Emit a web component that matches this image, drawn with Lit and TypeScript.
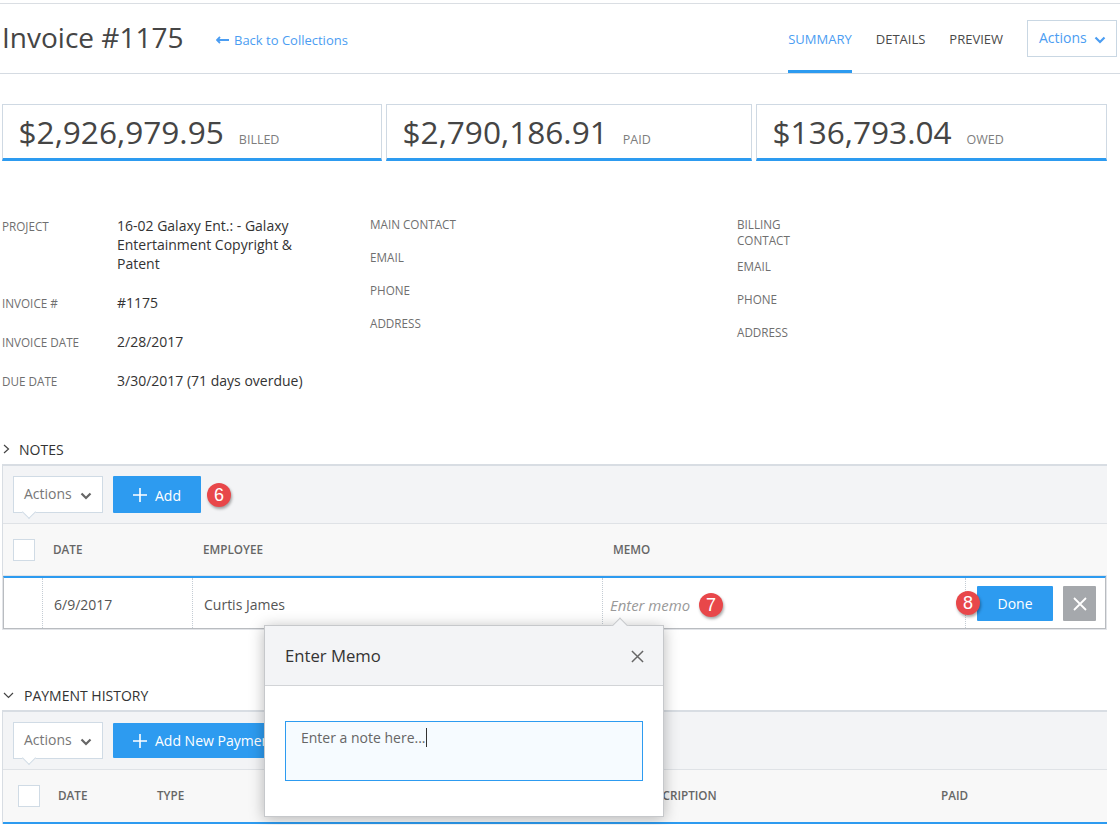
import { LitElement, html, css } from "lit";
import { customElement } from "lit/decorators.js";

const chev = () => html`<svg width="12" height="8" viewBox="0 0 12 8"><path d="M1.5 1.5 6 6l4.5-4.5" fill="none" stroke="currentColor" stroke-width="2.2"/></svg>`;
const plus = html`<svg width="16" height="16" viewBox="0 0 16 16"><path d="M8 1v14M1 8h14" stroke="#fff" stroke-width="1.6" fill="none"/></svg>`;
const x = (s: number, c: string, w: number) => html`<svg width=${s} height=${s} viewBox="0 0 14 14"><path d="M1 1l12 12M13 1 1 13" stroke=${c} stroke-width=${w} fill="none"/></svg>`;

@customElement("app-root")
export class AppRoot extends LitElement {
  static styles = css`
    :host { display: block; position: relative; width: 1120px; height: 825px; overflow: hidden; background: #fff; font-family: "Open Sans", sans-serif; color: #444; font-size: 14px; }
    * { box-sizing: border-box; }
    .top { margin-top: 3px; border-top: 1px solid #dadee3; border-bottom: 1px solid #d5dbe2; height: 71px; display: flex; align-items: stretch; padding-left: 2px; }
    .title { font-size: 28px; line-height: 38px; margin-top: 14px; color: #454545; width: 214px; white-space: nowrap; }
    .back { display: flex; align-items: center; gap: 5px; color: #4b9df2; font-size: 13px; height: 20px; margin-top: 26px; }
    .tabs { margin-left: auto; display: flex; align-items: stretch; padding-right: 3px; }
    .tab { font-size: 13px; text-transform: uppercase; line-height: 16px; padding-top: 27px; margin-right: 24px; color: #4a4a4a; border-bottom: 3px solid transparent; height: 69px; }
    .tab.on { color: #4b9df2; border-bottom-color: #2d9bf0; }
    .act { display: flex; align-items: center; justify-content: space-between; width: 90px; height: 37px; margin-top: 16px; padding: 0 10px 2px 11px; border: 1px solid #c9d7e3; color: #4b9df2; font-size: 14px; }
    .act svg { margin-top: 4px; }
    .stats { display: grid; grid-template-columns: 380px 366px 351px; gap: 4px; margin: 30px 0 0 2px; }
    .stat { height: 57px; border: 1px solid #cfd9e3; border-bottom: 3px solid #2d9bf0; display: flex; align-items: baseline; padding-left: 15.5px; line-height: 54px; }
    .stat b { font-weight: 400; font-size: 31.6px; color: #454545; margin-right: 15px; }
    .stat span { font-size: 12.5px; color: #7d7d7d; }
    .info { display: grid; grid-template-columns: 368px 367px 1fr; margin: 55px 0 0 2px; height: 223px; }
    .l { display: grid; grid-template-columns: 115px 190px; row-gap: 20px; align-content: start; line-height: 19px; font-size: 14px; color: #333; }
    .lab { font-size: 11.7px; color: #6f6f6f; text-transform: uppercase; }
    .l .lab { line-height: 21px; margin-bottom: -2px; }
    .m { display: flex; flex-direction: column; gap: 17px; line-height: 16px; }
    .m .lab.tight { width: 60px; margin-bottom: -7px; }
    .sec { display: flex; align-items: center; height: 20px; color: #333; font-size: 14px; padding-left: 3px; }
    .sec svg { color: #444; }
    .notes-h { gap: 9px; }
    .pay-h { gap: 10px; margin-top: 56px; }
    .panel { margin: 5px 13px 0 2px; border-top: 2px solid #d8dde3; border-left: 1px solid #d8dde3; }
    .bar { height: 58px; background: #f3f4f6; border-bottom: 1px solid #dfe2e6; display: flex; gap: 10px; padding: 10px 0 0 10px; align-items: flex-start; }
    .pill { position: relative; width: 90px; height: 37px; background: #fff; border: 1px solid #d0dbe5; display: flex; align-items: center; justify-content: space-between; padding: 0 10px 2px 10px; color: #777; }
    .pill svg { margin-top: 4px; color: #666; }
    .pill::after { content: ""; position: absolute; left: 10px; bottom: -5px; width: 9px; height: 9px; background: #fff; border-right: 1px solid #d0dbe5; border-bottom: 1px solid #d0dbe5; transform: rotate(45deg); }
    .btn { height: 37px; background: #2d9bf0; border-radius: 1px; color: #fff; display: flex; align-items: center; gap: 7px; padding: 1px 20px 0 19px; white-space: nowrap; font-size: 14px; }
    .btn.short { height: 35px; margin-top: 1px; padding-top: 0; }
    .badge { flex: none; width: 24px; height: 24px; border-radius: 50%; background: #e8474a; color: #fff; font: 18px/24px "Liberation Sans", sans-serif; text-align: center; box-shadow: 1px 2px 3px rgba(0,0,0,.35); }
    .bar .badge { margin: 7px 0 0 -4px; }
    .head { height: 52px; background: #f8f8f8; display: grid; align-items: center; font-size: 11.7px; font-weight: 600; color: #666; }
    .n { grid-template-columns: 39px 150px 410px 1fr; }
    .cb { width: 22px; height: 22px; background: #fff; border: 1px solid #d0dbe5; }
    .head .lbl { padding: 0 0 2px 11px; }
    .n .cb { margin-left: 10px; }
    .row { height: 53px; margin-right: 1px; border-top: 2px solid #2d9bf0; border-left: 1px solid #b9bcc0; border-right: 1px solid #b9bcc0; border-bottom: 1px solid #b9bcc0; box-shadow: 0 0 0 1px #e2e4e8; display: grid; grid-template-columns: 38px 150px 410px 363px 1fr; background: #fff; }
    .c { border-left: 1px dotted #c4ccd4; display: flex; align-items: center; padding: 3px 0 0 11px; color: #555; position: relative; }
    .c:first-child { border-left: 0; }
    .memo { font-style: italic; font-size: 14.9px; color: #999; padding-left: 7px; gap: 9px; }
    .memo .badge { font-style: normal; }
    .acts { gap: 10px; padding: 1px 0 0 11px; }
    .done { width: 76px; height: 35px; background: #2d9bf0; color: #fff; display: flex; align-items: center; justify-content: center; border-radius: 1px; }
    .cancel { width: 33px; height: 35px; background: #a5a8ac; display: flex; align-items: center; justify-content: center; border-radius: 1px; }
    .over { position: absolute; left: -10px; top: 13px; }
    .p { grid-template-columns: 55px 99px 484px 300px 1fr; }
    .p .cb { margin-left: 15px; }
    .head.p .lbl { padding-left: 0; }
    .p-line { height: 2px; background: #2d9bf0; }
    .pop { position: absolute; left: 264px; top: 625px; width: 400px; height: 192px; background: #fff; border: 1px solid #c6c8cb; box-shadow: 0 2px 14px rgba(0,0,0,.28); }
    .pop::before { content: ""; position: absolute; left: 349px; top: -6px; width: 11px; height: 11px; background: #f3f4f6; border-left: 1px solid #c6c8cb; border-top: 1px solid #c6c8cb; transform: rotate(45deg); }
    .ph { position: relative; height: 60px; background: #f3f4f6; border-bottom: 1px solid #d2d4d7; display: flex; align-items: center; justify-content: space-between; padding: 0 19px 0 20px; font-size: 16.7px; color: #333; }
    .ph svg { margin-top: 2px; }
    .ta { margin: 35px 20px 0; height: 60px; background: #f6fbff; border: 1px solid #2d9bf0; padding: 6px 0 0 15px; color: #666; font-size: 14px; line-height: 19px; }
    .caret { display: inline-block; width: 1px; height: 19px; background: #333; vertical-align: top; }
  `;

  render() {
    return html`
      <div class="top">
        <div class="title">Invoice #1175</div>
        <div class="back">
          <svg width="13" height="8" viewBox="0 0 13 8"><path d="M13 4H2M4 1 1 4l3 3" stroke="#4b9df2" stroke-width="1.8" fill="none"/></svg>
          Back to Collections
        </div>
        <div class="tabs">
          <div class="tab on">Summary</div>
          <div class="tab">Details</div>
          <div class="tab">Preview</div>
          <div class="act">Actions ${chev()}</div>
        </div>
      </div>

      <div class="stats">
        <div class="stat"><b>$2,926,979.95</b><span>BILLED</span></div>
        <div class="stat"><b>$2,790,186.91</b><span>PAID</span></div>
        <div class="stat"><b>$136,793.04</b><span>OWED</span></div>
      </div>

      <div class="info">
        <div class="l">
          <div class="lab">Project</div><div>16-02 Galaxy Ent.: - Galaxy Entertainment Copyright &amp; Patent</div>
          <div class="lab">Invoice #</div><div>#1175</div>
          <div class="lab">Invoice Date</div><div>2/28/2017</div>
          <div class="lab">Due Date</div><div>3/30/2017 (71 days overdue)</div>
        </div>
        <div class="m">
          <div class="lab">Main Contact</div>
          <div class="lab">Email</div>
          <div class="lab">Phone</div>
          <div class="lab">Address</div>
        </div>
        <div class="m">
          <div class="lab tight">Billing Contact</div>
          <div class="lab">Email</div>
          <div class="lab">Phone</div>
          <div class="lab">Address</div>
        </div>
      </div>

      <div class="sec notes-h">
        <svg width="7" height="10" viewBox="0 0 7 10"><path d="M1 1l4.5 4L1 9" fill="none" stroke="currentColor" stroke-width="1.2"/></svg>
        NOTES
      </div>
      <div class="panel">
        <div class="bar">
          <div class="pill">Actions ${chev()}</div>
          <div class="btn">${plus} Add</div>
          <div class="badge">6</div>
        </div>
        <div class="head n">
          <div class="cb"></div>
          <div class="lbl">DATE</div>
          <div class="lbl">EMPLOYEE</div>
          <div class="lbl">MEMO</div>
        </div>
        <div class="row">
          <div class="c"></div>
          <div class="c">6/9/2017</div>
          <div class="c">Curtis James</div>
          <div class="c memo">Enter memo <div class="badge">7</div></div>
          <div class="c acts">
            <div class="badge over">8</div>
            <div class="done">Done</div>
            <div class="cancel">${x(14, "#fff", 1.8)}</div>
          </div>
        </div>
      </div>

      <div class="sec pay-h">
        <svg width="11" height="7" viewBox="0 0 11 7"><path d="M1 1l4.5 4.5L10 1" fill="none" stroke="currentColor" stroke-width="1.2"/></svg>
        PAYMENT HISTORY
      </div>
      <div class="panel">
        <div class="bar">
          <div class="pill">Actions ${chev()}</div>
          <div class="btn short">${plus} Add New Payment</div>
        </div>
        <div class="head p">
          <div class="cb"></div>
          <div class="lbl">DATE</div>
          <div class="lbl">TYPE</div>
          <div class="lbl">DESCRIPTION</div>
          <div class="lbl">PAID</div>
        </div>
        <div class="p-line"></div>
      </div>

      <div class="pop">
        <div class="ph"><span>Enter Memo</span>${x(13, "#666", 1.6)}</div>
        <div class="ta">Enter a note here...<span class="caret"></span></div>
      </div>
    `;
  }
}
